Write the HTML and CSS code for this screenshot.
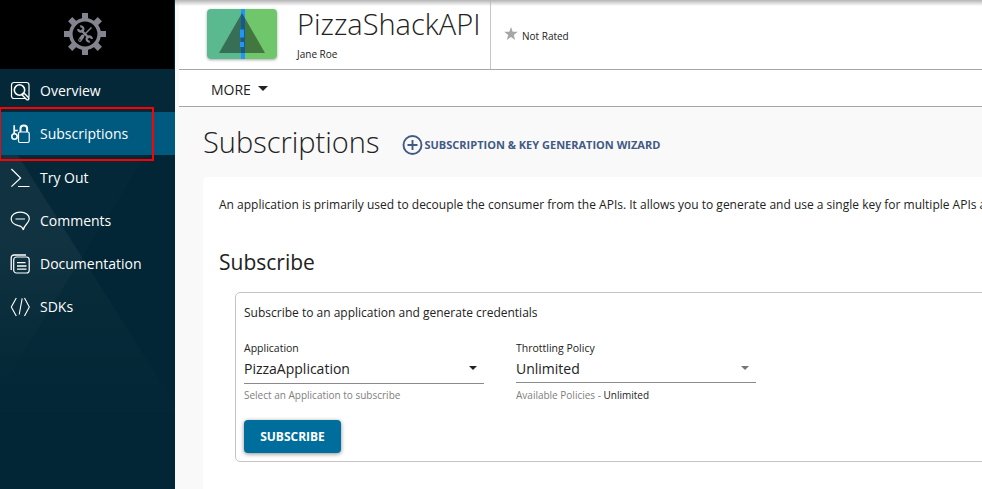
FILE: index.html
```html
<!DOCTYPE html>
<html lang="en">
<head>
<meta charset="utf-8">
<title>PizzaShackAPI - Subscriptions</title>
<link rel="stylesheet" href="styles.css">
</head>
<body>
<div class="app">
  <aside class="sidebar">
    <svg class="facets" viewBox="0 0 175 420" preserveAspectRatio="none">
      <defs>
        <linearGradient id="fade" x1="0" y1="0" x2="0" y2="1">
          <stop offset="0" stop-color="#fff" stop-opacity=".03"/>
          <stop offset=".4" stop-color="#fff" stop-opacity=".03"/>
          <stop offset="1" stop-color="#fff" stop-opacity="0"/>
        </linearGradient>
      </defs>
      <path d="M0 58L175 336V358H0Z" fill="url(#fade)"/>
      <path d="M0 58L82 188L0 321Z" fill="url(#fade)"/>
      <path d="M0 0H175V40L82 188L0 58Z" fill="#fff" fill-opacity=".012"/>
    </svg>
    <a class="brand">
      <svg width="42" height="42" viewBox="0 0 42 42">
        <g fill="#84848e">
          <path d="M18 0h6v7h-6zM18 35h6v7h-6zM0 18h7v6H0zM35 18h7v6h-7z"/>
          <path transform="rotate(45 21 21)" d="M18 0h6v7h-6zM18 35h6v7h-6zM0 18h7v6H0zM35 18h7v6h-7z"/>
        </g>
        <circle cx="21" cy="21" r="14.2" fill="#000" stroke="#84848e" stroke-width="3.6"/>
        <g fill="none" stroke="#84848e">
          <path d="M17 17l8 8" stroke-width="2.4"/>
          <path d="M14.2 16a2.6 2.6 0 1 0 2-2.5M27.8 26a2.6 2.6 0 1 0-2 2.5" stroke-width="2.2"/>
          <path d="M27.5 14.5L18 24" stroke-width="1.5"/>
          <path d="M18.5 23.5l-2.5 3.5" stroke-width="3.6" stroke-linecap="round"/>
        </g>
        <circle cx="15.8" cy="27" r=".8" fill="#000"/>
      </svg>
    </a>
    <nav class="menu">
      <a class="item">
        <svg viewBox="0 0 20 20"><rect x="1.5" y="1.5" width="17.5" height="16" rx="2.5"/><circle cx="9.5" cy="9" r="5.2" stroke-width="1.6"/><path d="M13.5 13.5l4 4" stroke-width="4" stroke-linecap="round"/><path d="M14 14l3.5 3.5" stroke="#042838" stroke-width="1.3" stroke-linecap="round"/></svg>
        <span>Overview</span>
      </a>
      <a class="item active">
        <svg viewBox="0 0 20 20"><rect x="8.5" y="8" width="10.7" height="10.5" rx="1.5"/><path d="M10.5 8V4.5q0-3 3.3-3t3.3 3V8" stroke-width="2"/><circle cx="4.5" cy="12.5" r="2.7" stroke-width="1.6"/><path d="M4.2 9.7V1.2M4.2 6.5h3.6" stroke-width="1.7"/></svg>
        <span>Subscriptions</span>
      </a>
      <a class="item">
        <svg viewBox="0 0 20 20"><path d="M1.4 1l9.2 9L1.4 18.6M8 18.5h11.5"/></svg>
        <span>Try Out</span>
      </a>
      <a class="item">
        <svg viewBox="0 0 20 20"><path d="M13.3 19C12.5 15.5 10.5 15 8.3 14.6C4 13.7 1.2 11.3 1.2 7.8C1.2 4 5 1.2 10.3 1.2s9 2.8 9 6.6c0 4.8-5.3 5.5-6 11.2zM5.5 8h9.5" /></svg>
        <span>Comments</span>
      </a>
      <a class="item">
        <svg viewBox="0 0 20 20"><rect x="3.7" y="3" width="15.5" height="16" rx="2.8"/><path d="M1.2 16V4q0-3 3-3H16M7 8.7h8.5M7 12h9.5M7 15.2h9.5" stroke-width="1.3"/></svg>
        <span>Documentation</span>
      </a>
      <a class="item">
        <svg viewBox="0 0 20 20"><path d="M6.3 1L1.3 10l5 9M14.5 1l4.8 9-4.8 9M12.2 1.3L9.2 17.5" stroke-width="1.1"/></svg>
        <span>SDKs</span>
      </a>
    </nav>
    <div class="highlight"></div>
  </aside>

  <main class="main">
    <header class="info">
      <svg class="thumb" width="70" height="50" viewBox="0 0 70 50">
        <path fill="#5bb98f" d="M0 0h34v50H0z"/><path fill="#70c66b" d="M38 0h32v50H38z"/><path fill="#2196f3" d="M34 0h4v50h-4z"/>
        <path fill="#000" fill-opacity=".4" d="M35 4L12 44h46z"/>
        <path fill="#2196f3" d="M33 20.5h4v8h-4zM33 33h4v5h-4z"/>
      </svg>
      <div class="title">
        <h1>PizzaShackAPI</h1>
        <p>Jane Roe</p>
      </div>
      <div class="rating">
        <svg width="14" height="13" viewBox="0 0 14 13"><path fill="#a6a6a6" d="M7 0l1.7 4.7 5.1.1-4 3.2 1.4 4.9L7 10.1l-4.2 2.8 1.4-4.9-4-3.2 5.1-.1z"/></svg>
        <span>Not Rated</span>
      </div>
    </header>
    <div class="more"><span>MORE</span><i class="caret wide"></i></div>

    <div class="heading">
      <h2>Subscriptions</h2>
      <a class="wizard">
        <svg width="22" height="22" viewBox="0 0 22 22"><g fill="none" stroke="#415a85" stroke-width="1.9"><circle cx="10.5" cy="11" r="9"/><path d="M10.5 6v10M5.5 11h10"/></g></svg>
        <span>SUBSCRIPTION &amp; KEY GENERATION WIZARD</span>
      </a>
    </div>

    <section class="card">
      <p class="intro">An application is primarily used to decouple the consumer from the APIs. It allows you to generate and use a single key for multiple APIs and subscribe</p>
      <h3>Subscribe</h3>
      <div class="panel">
        <p class="lead">Subscribe to an application and generate credentials</p>
        <div class="fields">
          <div class="field">
            <label>Application</label>
            <div class="select"><span>PizzaApplication</span><i class="caret"></i></div>
            <small>Select an Application to subscribe</small>
          </div>
          <div class="field">
            <label>Throttling Policy</label>
            <div class="select short"><span>Unlimited</span><i class="caret muted"></i></div>
            <small>Available Policies - <b>Unlimited</b></small>
          </div>
        </div>
        <button class="btn">SUBSCRIBE</button>
      </div>
    </section>
  </main>
</div>
</body>
</html>
```

FILE: styles.css
```css
* { box-sizing: border-box; }
body { margin: 0; font-family: "Open Sans", sans-serif; font-size: 12px; color: #222; overflow: hidden; }
h1, h2, h3, p { margin: 0; font-weight: 400; }
.app { display: flex; width: 100vw; height: 100vh; overflow: hidden; background: #f9f9f9; }

.sidebar { position: relative; flex: 0 0 175px; background: #022635; }
.facets { position: absolute; left: 0; top: 69px; width: 175px; height: 420px; }
.brand { position: relative; display: flex; width: 174px; height: 69px; padding: 13px 0 0 64px; background: #000; }
.menu { position: relative; }
.item { display: flex; align-items: center; gap: 10px; height: 43.2px; padding-left: 10px; color: #fff; font-size: 14px; line-height: 20px; }
.item.active { background: #005a80; }
.item.active + .item { margin-top: .6px; }
.item svg { width: 20px; height: 20px; fill: none; stroke: #fff; stroke-width: 1.2; }
.highlight { position: absolute; left: 0; top: 107px; width: 154px; height: 54px; border: 2px solid #fe0000; border-left-width: 1px; }

.main { position: relative; flex: 1; min-width: 0; overflow: hidden; }
.main::before { content: ""; position: absolute; z-index: 1; left: 0; right: 0; top: 0; height: 6px; background: linear-gradient(#b4b4b4, rgba(255, 255, 255, 0)); }
.info { display: flex; height: 70px; margin-left: 4px; padding-left: 28px; background: #fff; border-bottom: 1px solid #a6a6a6; }
.thumb { margin-top: 9px; border-radius: 4px; box-shadow: 0 1px 3px rgba(0, 0, 0, .35); }
.title { width: 214px; padding: 4px 0 0 20px; border-right: 1px solid #c4c4c4; white-space: nowrap; }
.title h1 { font-size: 29px; font-weight: 300; line-height: 40px; }
.title p { font-size: 10px; line-height: 20px; }
.rating { display: flex; gap: 4px; padding: 27px 0 0 13px; font-size: 10px; line-height: 18px; }
.more { display: flex; align-items: center; gap: 7px; height: 37px; margin-left: 4px; padding: 2px 0 0 32px; background: #fff; border-bottom: 1px solid #a6a6a6; font-size: 14px; }
.caret { width: 0; height: 0; border: solid transparent; border-width: 4px 4px 0; border-top-color: #222; }
.caret.wide { border-width: 5px 5px 0; margin-bottom: 1px; }
.caret.muted { border-top-color: #757575; }
.select .caret { margin-bottom: 1px; }
.select.short .caret { margin-bottom: 3px; }

.heading { display: flex; height: 70px; padding-left: 28px; white-space: nowrap; }
.heading h2 { width: 199px; padding-top: 15px; font-size: 29px; font-weight: 300; line-height: 40px; }
.wizard { display: flex; align-items: center; height: 22px; margin-top: 27px; color: #415a85; font-size: 11px; font-weight: 700; }
.wizard span { padding: 0 0 2px .5px; }

.card { height: 340px; margin-left: 28px; padding: 18px 0 0 16px; background: #fff; border-radius: 4px 0 0 0; white-space: nowrap; }
.intro { line-height: 20px; }
h3 { margin-top: 32px; font-size: 21px; line-height: 30px; }
.panel { width: 900px; height: 170px; margin: 15px 0 0 16px; padding: 10px 8px; border: 1px solid #c4c4c4; border-radius: 5px; }
.lead { line-height: 20px; }
.fields { display: flex; gap: 32px; margin-top: 17px; }
.field { width: 240px; height: 66px; }
.field label { display: block; font-size: 10.5px; line-height: 16px; }
.select { display: flex; align-items: center; justify-content: space-between; height: 28px; padding: 0 7px 2px 0; border-bottom: 1px solid #8a8a8a; font-size: 14px; line-height: 20px; }
.select.short { height: 27px; padding-bottom: 0; margin-bottom: 1px; }
.select.short span { margin-bottom: 1px; }
.field small { display: block; padding-top: 3px; color: #808080; font-size: 10px; line-height: 16px; }
.field b { color: #222; font-weight: 400; }
.btn { display: block; width: 97px; height: 33px; margin-top: 14px; padding: 0; border: 0; border-radius: 4px; background: #006e9c; color: #fff; font: 700 12px "Open Sans", sans-serif; box-shadow: 0 1px 4px rgba(0, 0, 0, .45); }
```
